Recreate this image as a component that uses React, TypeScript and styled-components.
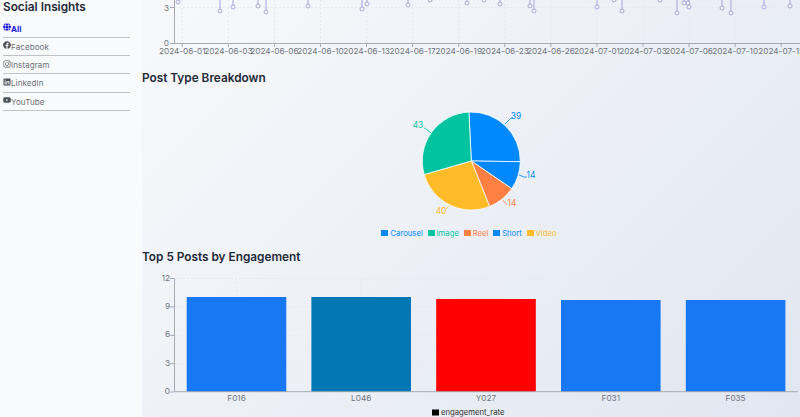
import React from "react";
import styled, { createGlobalStyle } from "styled-components";
import { FaFacebook, FaGlobe, FaInstagram, FaLinkedin, FaYoutube } from "react-icons/fa";

const GlobalStyle = createGlobalStyle`
  html, body {
    margin: 0;
    padding: 0;
    height: 100%;
    overflow: hidden;
    font-family: Inter, "Liberation Sans", sans-serif;
  }
`;

const Shell = styled.div`
  display: grid;
  grid-template-columns: 142px 658px;
  width: 800px;
  height: 417px;
  overflow: hidden;
  background: linear-gradient(135deg, #fafbfd 0%, #e1e7f0 100%);
`;

const Sidebar = styled.aside`
  background: #f9fafc;
  padding: 0 12px 0 3px;
`;

const Brand = styled.h1`
  margin: 0;
  height: 18.5px;
  font-size: 11.8px;
  line-height: 14px;
  font-weight: 600;
  color: #1f2937;
`;

const NavList = styled.nav`
  display: flex;
  flex-direction: column;
  margin-top: 1px;
`;

const NavItem = styled.a<{ $active?: boolean }>`
  display: flex;
  align-items: center;
  height: 18.25px;
  box-sizing: border-box;
  padding-top: 1px;
  border-bottom: 1px solid #bfc2c7;
  font-size: 8px;
  letter-spacing: 0.1px;
  font-weight: ${(p) => (p.$active ? 700 : 400)};
  color: ${(p) => (p.$active ? "#1a1ae6" : "#6b6f76")};

  svg {
    width: 8px;
    height: 8px;
    margin-top: -3px;
    color: ${(p) => (p.$active ? "#1a1ae6" : "#4b5058")};
  }
`;

const Main = styled.main`
  display: flex;
  flex-direction: column;
  min-width: 0;
`;

const SectionTitle = styled.h2<{ $top: number; $bottom: number }>`
  margin: ${(p) => p.$top}px 0 ${(p) => p.$bottom}px;
  height: 18px;
  font-size: 11.8px;
  line-height: 18px;
  font-weight: 600;
  color: #1f2937;
`;

const ChartSvg = styled.svg`
  display: block;
  flex: none;
`;

const AxisText = styled.text`
  font-family: Inter, "Liberation Sans", sans-serif;
  font-size: 8.2px;
  fill: #70757d;
`;

const SeriesText = styled(AxisText)`
  font-size: 7.7px;
  fill: #333;
`;

const PieText = styled.text`
  font-family: Inter, "Liberation Sans", sans-serif;
  font-size: 8.4px;
`;

const Legend = styled.div`
  display: flex;
  justify-content: center;
  gap: 4.8px;
  height: 13px;
  padding: 1px 4px 0 0;
  box-sizing: border-box;
  align-items: center;
  font-size: 7.7px;
`;

const LegendItem = styled.span<{ $color: string }>`
  display: flex;
  align-items: center;
  gap: 2px;
  color: ${(p) => p.$color};

  &::before {
    content: "";
    width: 7px;
    height: 6px;
    background: ${(p) => p.$color};
  }
`;

const navItems = [
  { label: "All", icon: <FaGlobe />, active: true },
  { label: "Facebook", icon: <FaFacebook /> },
  { label: "Instagram", icon: <FaInstagram /> },
  { label: "LinkedIn", icon: <FaLinkedin /> },
  { label: "YouTube", icon: <FaYoutube /> },
];

const trendDates = [
  "06-01", "06-03", "06-06", "06-10", "06-13", "06-17", "06-19",
  "06-23", "06-26", "07-01", "07-03", "07-06", "07-10", "07-15",
];

const trendDots = [
  [178, 2], [220, 11], [233, 7], [258, 6], [266, 12], [308, 6], [362, 9], [367, 4],
  [408, 5], [430, 0], [467, 3], [500, 4], [484, 0], [534, 11], [530, 6], [597, 7],
  [622, 11], [614, 0], [660, 0], [677, 13], [689, 7], [688, 3], [684, 3], [722, 8],
  [731, 13], [764, 7], [790, 6],
];

const pieSlices = [
  { name: "Carousel", value: 39, color: "#0088fe", label: [516, 116], line: "505,124 511,118 513,118" },
  { name: "Short", value: 14, color: "#0088fe", label: [531, 175], line: "519,175 524,177 527,177" },
  { name: "Reel", value: 14, color: "#ff8042", label: [512, 203], line: "503,200 507,205" },
  { name: "Video", value: 40, color: "#ffbb28", label: [441, 211], line: "446,209 449,206" },
  { name: "Image", value: 43, color: "#00c49f", label: [418, 125], line: "431,133 426,129 424,128" },
];

const legendOrder = [
  ["Carousel", "#0088fe"],
  ["Image", "#00c49f"],
  ["Reel", "#ff8042"],
  ["Short", "#0088fe"],
  ["Video", "#ffbb28"],
];

const bars = [
  { id: "F016", x: 186.7, top: 297, color: "#1877f2" },
  { id: "L046", x: 311.4, top: 297, color: "#0077b5" },
  { id: "Y027", x: 436.2, top: 299, color: "#ff0000" },
  { id: "F031", x: 561, top: 300, color: "#1877f2" },
  { id: "F035", x: 685.8, top: 300, color: "#1877f2" },
];

const sliceTotal = pieSlices.reduce((sum, s) => sum + s.value, 0);

// clockwise from 12 o'clock, degrees
const polar = (cx: number, cy: number, r: number, deg: number) => {
  const rad = (deg * Math.PI) / 180;
  return `${(cx + r * Math.sin(rad)).toFixed(2)} ${(cy - r * Math.cos(rad)).toFixed(2)}`;
};

const GRID = "#e6e9ef";
const AXIS = "#a6abb3";
const PIE_X = 471.3;
const PIE_Y = 161;
const PIE_R = 49;

const TrendChart = () => (
  <ChartSvg width={658} height={62} viewBox="142 0 658 62">
    <line x1={175} x2={800} y1={7.5} y2={7.5} stroke={GRID} strokeDasharray="2 2" />
    {trendDates.map((_, i) => {
      const x = 182.3 + i * 46.07;
      return <line key={i} x1={x} x2={x} y1={0} y2={43} stroke={GRID} strokeDasharray="2 2" />;
    })}
    {trendDots.map(([x, y], i) => (
      <g key={i}>
        <line x1={x} x2={x} y1={-2} y2={y} stroke="#a5a3dc" strokeWidth={1} />
        <circle cx={x} cy={y} r={2} fill="#f3f5f9" stroke="#9a98d8" strokeWidth={0.8} />
      </g>
    ))}
    <line x1={174.5} x2={174.5} y1={0} y2={43} stroke={AXIS} />
    <line x1={174} x2={800} y1={43.5} y2={43.5} stroke={AXIS} />
    <line x1={170} x2={174} y1={7.5} y2={7.5} stroke={AXIS} />
    <line x1={170} x2={174} y1={43.5} y2={43.5} stroke={AXIS} />
    <AxisText x={169} y={10.5} textAnchor="end">3</AxisText>
    <AxisText x={169} y={46} textAnchor="end">0</AxisText>
    {trendDates.map((d, i) => {
      const x = 182.3 + i * 46.07;
      return (
        <g key={d}>
          <line x1={x} x2={x} y1={43} y2={47} stroke={AXIS} />
          <AxisText x={x} y={53.5} textAnchor="middle">{`2024-${d}`}</AxisText>
        </g>
      );
    })}
  </ChartSvg>
);

const PieChart = () => {
  let angle = -2.8;
  return (
    <ChartSvg width={658} height={131} viewBox="142 95 658 131">
      {pieSlices.map((s) => {
        const start = angle;
        const sweep = (s.value / sliceTotal) * 360;
        angle += sweep;
        const d = `M${PIE_X} ${PIE_Y} L${polar(PIE_X, PIE_Y, PIE_R, start)} A${PIE_R} ${PIE_R} 0 ${sweep > 180 ? 1 : 0} 1 ${polar(PIE_X, PIE_Y, PIE_R, start + sweep)} Z`;
        return <path key={s.name} d={d} fill={s.color} stroke="#fff" strokeWidth={0.8} />;
      })}
      {pieSlices.map((s) => (
        <g key={s.name}>
          <polyline points={s.line} fill="none" stroke={s.color} strokeWidth={0.8} />
          <PieText x={s.label[0]} y={s.label[1] + 3} textAnchor="middle" fill={s.color}>{s.value}</PieText>
        </g>
      ))}
    </ChartSvg>
  );
};

const BarChart = () => (
  <ChartSvg width={658} height={147} viewBox="142 270 658 147">
    {[278.5, 306.9, 335.3, 363.7].map((y) => (
      <line key={y} x1={175} x2={798} y1={y} y2={y} stroke={GRID} strokeDasharray="2 2" />
    ))}
    {[236.5, 361.3, 486, 611, 735.5].map((x) => (
      <line key={x} x1={x} x2={x} y1={278} y2={392} stroke={GRID} strokeDasharray="2 2" />
    ))}
    {bars.map((b) => (
      <rect key={b.id} x={b.x} y={b.top} width={99.6} height={392 - b.top} fill={b.color} />
    ))}
    <line x1={174.5} x2={174.5} y1={278} y2={392} stroke={AXIS} />
    <line x1={174} x2={798} y1={391.7} y2={391.7} stroke={AXIS} />
    {[["12", 278.5], ["9", 306.9], ["6", 335.3], ["3", 363.7], ["0", 392]].map(([label, y]) => (
      <g key={label}>
        <line x1={170} x2={174} y1={y} y2={y} stroke={AXIS} />
        <AxisText x={170} y={Number(y) + 2} textAnchor="end">{label}</AxisText>
      </g>
    ))}
    {bars.map((b) => (
      <AxisText key={b.id} x={b.x + 49.8} y={401} textAnchor="middle">{b.id}</AxisText>
    ))}
    <rect x={432} y={409.5} width={7} height={6} fill="#000" />
    <SeriesText x={441} y={415}>engagement_rate</SeriesText>
  </ChartSvg>
);

const App: React.FC = () => {
  return (
    <>
      <GlobalStyle />
      <Shell>
        <Sidebar>
          <Brand>Social Insights</Brand>
          <NavList>
            {navItems.map((item) => (
              <NavItem key={item.label} $active={item.active}>
                {item.icon}
                {item.label}
              </NavItem>
            ))}
          </NavList>
        </Sidebar>
        <Main>
          <TrendChart />
          <SectionTitle $top={7} $bottom={8}>Post Type Breakdown</SectionTitle>
          <PieChart />
          <Legend>
            {legendOrder.map(([name, color]) => (
              <LegendItem key={name} $color={color}>{name}</LegendItem>
            ))}
          </Legend>
          <SectionTitle $top={9} $bottom={4}>Top 5 Posts by Engagement</SectionTitle>
          <BarChart />
        </Main>
      </Shell>
    </>
  );
};

export default App;
